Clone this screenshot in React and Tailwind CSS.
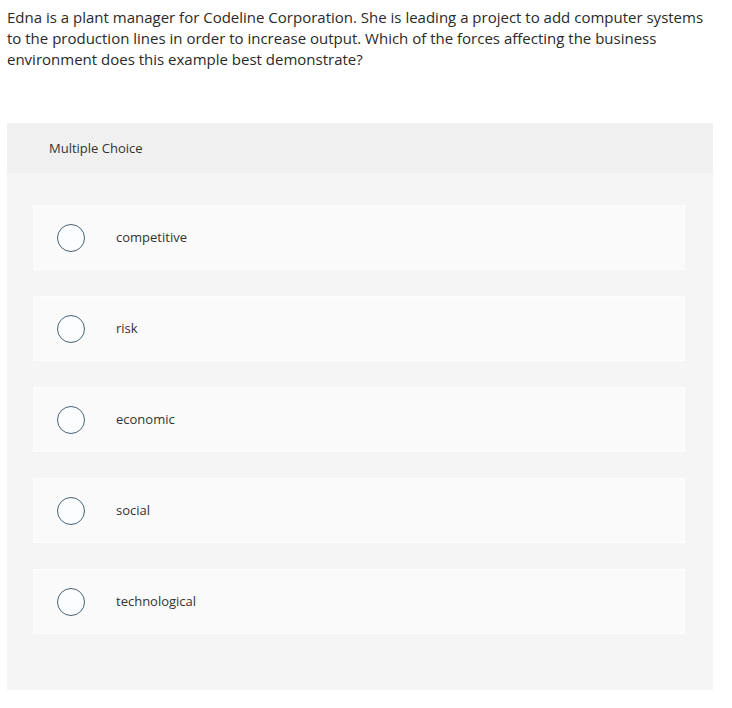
export default function App() {
  const options = ['competitive', 'risk', 'economic', 'social', 'technological'];

  return (
    <div className="min-h-screen bg-white" style={{ fontFamily: '"Open Sans", sans-serif' }}>
      {/* Question */}
      <div className="pl-[7px] pt-[7px] text-[15px] leading-[21px] text-[#2a2a2a] whitespace-nowrap">
        Edna is a plant manager for Codeline Corporation. She is leading a project to add computer systems
        <br />
        to the production lines in order to increase output. Which of the forces affecting the business
        <br />
        environment does this example best demonstrate?
      </div>

      {/* Choice panel */}
      <div className="ml-[7px] mt-[53px] w-[706px] bg-[#f5f5f5] pb-[56px]">
        <div className="h-[50px] bg-[#f0f0f0] pl-[42px] pt-[1px] flex items-center text-[13px] text-[#333]">
          Multiple Choice
        </div>
        <div className="flex flex-col gap-[26px] pt-[32px] pl-[26px] pr-[28px]">
          {options.map((o) => (
            <div key={o} className="h-[65px] bg-[#fafafa] border border-[#fdfdfd] flex items-center">
              <div className="ml-[23px] w-[28px] h-[28px] rounded-full border-[1.5px] border-[#4a6274] bg-[#fcfdfe]" />
              <span className="ml-[31px] text-[13px] text-[#333]">{o}</span>
            </div>
          ))}
        </div>
      </div>
    </div>
  );
}
